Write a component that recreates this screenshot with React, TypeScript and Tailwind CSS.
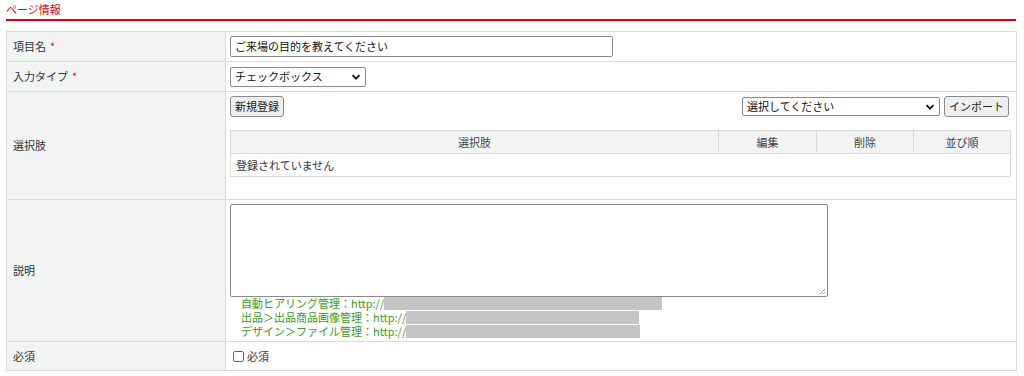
import { ReactNode } from "react";

const font = "font-['Meiryo','Noto_Sans_CJK_JP',sans-serif]";

// ラベル列
const Label = ({ children, required }: { children: ReactNode; required?: boolean }) => (
  <td className="w-[219px] bg-[#f2f3f3] border border-[#d9d9d9] pl-[6px] align-middle text-[#333]">
    {children}
    {required && <span className="ml-[4px] text-[#e60012]">*</span>}
  </td>
);

const Btn = ({ children }: { children: ReactNode }) => (
  <button className="h-[21px] px-[4px] border border-[#8a8a8a] rounded-[3px] bg-[#efefef] text-[#222] text-[11px] leading-none">
    {children}
  </button>
);

const Chevron = () => (
  <svg width="10" height="10" viewBox="0 0 10 10" className="shrink-0">
    <path d="M1.5 3.2 L5 6.7 L8.5 3.2" fill="none" stroke="#111" strokeWidth="1.8" />
  </svg>
);

export default function App() {
  return (
    <div className={`${font} w-[1024px] h-[376px] bg-white text-[11px] text-[#333] px-[6px] pt-[2px]`}>
      {/* タイトル */}
      <h2 className="text-[#d7000f] text-[11px] leading-[14px] h-[17px]">ページ情報</h2>
      <div className="h-[2px] bg-[#d7000f] w-[1010px]" />

      <table className="mt-[10px] w-[1011px] border-collapse">
        <tbody>
          <tr className="h-[30px]">
            <Label required>項目名</Label>
            <td className="border border-[#d9d9d9] pl-[4px]">
              <div className="w-[383px] h-[21px] border border-[#8a8a8a] rounded-[2px] flex items-center px-[4px] text-[#111]">
                ご来場の目的を教えてください
              </div>
            </td>
          </tr>
          <tr className="h-[30px]">
            <Label required>入力タイプ</Label>
            <td className="border border-[#d9d9d9] pl-[4px]">
              <div className="w-[136px] h-[20px] border border-[#8a8a8a] rounded-[2px] flex items-center justify-between px-[4px] text-[#111]">
                <span>チェックボックス</span>
                <Chevron />
              </div>
            </td>
          </tr>
          <tr className="h-[108px]">
            <Label>選択肢</Label>
            <td className="border border-[#d9d9d9] pl-[4px] pr-[5px] align-top pt-[4px]">
              <div className="flex items-center justify-between">
                <Btn>新規登録</Btn>
                <div className="flex items-center gap-[4px] mr-[2px]">
                  <div className="w-[198px] h-[19px] border border-[#8a8a8a] rounded-[2px] flex items-center justify-between px-[4px] text-[#111]">
                    <span>選択してください</span>
                    <Chevron />
                  </div>
                  <Btn>インポート</Btn>
                </div>
              </div>
              <table className="mt-[13px] w-[781px] border-collapse">
                <thead>
                  <tr className="h-[23px] bg-[#f2f3f3] text-[#444]">
                    <th className="font-normal border border-[#d9d9d9] w-[488px]">選択肢</th>
                    <th className="font-normal border border-[#d9d9d9] w-[98px]">編集</th>
                    <th className="font-normal border border-[#d9d9d9] w-[97px]">削除</th>
                    <th className="font-normal border border-[#d9d9d9]">並び順</th>
                  </tr>
                </thead>
                <tbody>
                  <tr className="h-[23px]">
                    <td colSpan={4} className="border border-[#d9d9d9] pl-[5px] text-[#333]">
                      登録されていません
                    </td>
                  </tr>
                </tbody>
              </table>
            </td>
          </tr>
          <tr className="h-[142px]">
            <Label>説明</Label>
            <td className="border border-[#d9d9d9] pl-[4px] align-top pt-[4px]">
              <div className="relative w-[598px] h-[93px] border border-[#8a8a8a] rounded-[2px]">
                <svg width="8" height="8" viewBox="0 0 8 8" className="absolute right-[1px] bottom-[1px]">
                  <path d="M7 2 L2 7 M7 5 L5 7" stroke="#999" strokeWidth="1" />
                </svg>
              </div>
              <div className="pl-[11px] -mt-[1px] text-[#3c9a1e] leading-[14px] text-[11px]">
                <div className="flex items-center">
                  <span>自動ヒアリング管理：http://</span>
                  <span className="inline-block w-[278px] h-[13px] bg-[#c4c4c4]" />
                </div>
                <div className="flex items-center">
                  <span>出品＞出品商品画像管理：http://</span>
                  <span className="inline-block w-[233px] h-[13px] bg-[#c4c4c4]" />
                </div>
                <div className="flex items-center">
                  <span>デザイン＞ファイル管理：http://</span>
                  <span className="inline-block w-[234px] h-[13px] bg-[#c4c4c4]" />
                </div>
              </div>
            </td>
          </tr>
          <tr className="h-[29px]">
            <Label>必須</Label>
            <td className="border border-[#d9d9d9] pl-[7px]">
              <label className="flex items-center gap-[3px]">
                <span className="inline-block w-[11px] h-[11px] border border-[#666] rounded-[2px]" />
                <span>必須</span>
              </label>
            </td>
          </tr>
        </tbody>
      </table>
    </div>
  );
}
